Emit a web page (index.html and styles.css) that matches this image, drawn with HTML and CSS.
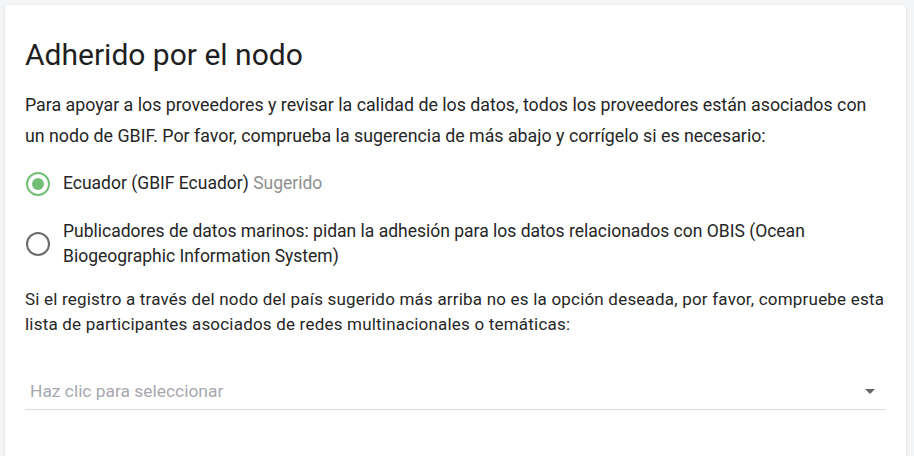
FILE: index.html
```html
<!DOCTYPE html>
<html lang="es">
<head>
<meta charset="utf-8">
<link rel="stylesheet" href="styles.css">
</head>
<body>
<div class="card">
  <h1 class="title">Adherido por el nodo</h1>
  <p class="intro">Para apoyar a los proveedores y revisar la calidad de los datos, todos los proveedores están asociados con un nodo de GBIF. Por favor, comprueba la sugerencia de más abajo y corrígelo si es necesario:</p>
  <div class="radios">
    <label class="radio">
      <span class="dot checked"></span>
      <span class="label">Ecuador (GBIF Ecuador) <span class="hint">Sugerido</span></span>
    </label>
    <label class="radio">
      <span class="dot"></span>
      <span class="label">Publicadores de datos marinos: pidan la adhesión para los datos relacionados con OBIS (Ocean Biogeographic Information System)</span>
    </label>
  </div>
  <p class="note">Si el registro a través del nodo del país sugerido más arriba no es la opción deseada, por favor, compruebe esta lista de participantes asociados de redes multinacionales o temáticas:</p>
  <div class="select">
    <span class="placeholder">Haz clic para seleccionar</span>
    <span class="caret"></span>
  </div>
</div>
</body>
</html>
```
FILE: styles.css
```css
html, body {
  margin: 0;
  padding: 0;
  background: #f4f5f7;
}
body {
  padding: 5px 8px 0 5px;
  font-family: Roboto, "Noto Sans", sans-serif;
  color: #262626;
  height: 456px;
  box-sizing: border-box;
  overflow: hidden;
}
.card {
  background: #fff;
  border-radius: 4px;
  box-shadow: 0 1px 3px rgba(0,0,0,0.12), 0 1px 2px rgba(0,0,0,0.06);
  padding: 20px 20px 60px 20px;
  width: 861px;
}
.title {
  margin: 10px 0 0 0;
  font-size: 30px;
  font-weight: 400;
  line-height: 40px;
  color: #1f1f1f;
}
.intro {
  margin: 14px 0 0 0;
  font-size: 17.8px;
  line-height: 31px;
}
.radios {
  margin-top: 20px;
  display: flex;
  flex-direction: column;
  gap: 23px;
}
.radio {
  display: flex;
  align-items: center;
  gap: 13px;
  font-size: 17.5px;
  line-height: 25px;
}
.dot {
  flex: none;
  width: 24px;
  height: 24px;
  box-sizing: border-box;
  border: 2px solid #6b6b6b;
  border-radius: 50%;
  margin-left: 1px;
  display: flex;
  align-items: center;
  justify-content: center;
}
.dot.checked {
  border-color: #74bf78;
}
.dot.checked::after {
  content: "";
  width: 12px;
  height: 12px;
  border-radius: 50%;
  background: #74bf78;
}
.hint {
  color: #8f8f8f;
}
.note {
  margin: 18px 0 0 0;
  font-size: 17px;
  letter-spacing: 0.2px;
  line-height: 25px;
}
.select {
  margin-top: 36px;
  display: flex;
  align-items: center;
  justify-content: space-between;
  height: 36px;
  border-bottom: 1px solid #dcdcdc;
  padding: 0 11px 0 5px;
}
.placeholder {
  color: #a8a8b0;
  font-size: 17.4px;
}
.caret {
  width: 0;
  height: 0;
  border-left: 5px solid transparent;
  border-right: 5px solid transparent;
  border-top: 5px solid #666;
}
```
